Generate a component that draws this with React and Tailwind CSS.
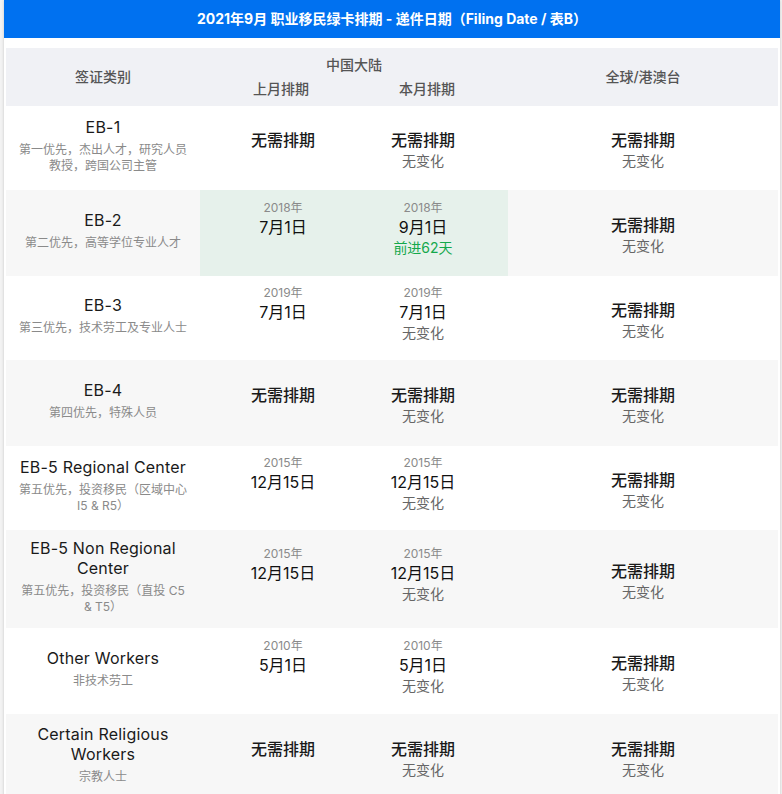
import React from "react";

const rows = [
  {
    title: ["EB-1"],
    sub: ["第一优先，杰出人才，研究人员", "教授，跨国公司主管"],
    prev: { main: "无需排期" },
    cur: { main: "无需排期", change: "无变化" },
    h: "h-[84px]",
    gray: false,
  },
  {
    title: ["EB-2"],
    sub: ["第二优先，高等学位专业人才"],
    prev: { year: "2018年", main: "7月1日" },
    cur: { year: "2018年", main: "9月1日", change: "前进62天", up: true },
    h: "h-[86px]",
    gray: true,
    green: true,
  },
  {
    title: ["EB-3"],
    sub: ["第三优先，技术劳工及专业人士"],
    prev: { year: "2019年", main: "7月1日" },
    cur: { year: "2019年", main: "7月1日", change: "无变化" },
    h: "h-[84px]",
    gray: false,
  },
  {
    title: ["EB-4"],
    sub: ["第四优先，特殊人员"],
    prev: { main: "无需排期" },
    cur: { main: "无需排期", change: "无变化" },
    h: "h-[86px]",
    gray: true,
  },
  {
    title: ["EB-5 Regional Center"],
    sub: ["第五优先，投资移民（区域中心", "I5 & R5）"],
    prev: { year: "2015年", main: "12月15日" },
    cur: { year: "2015年", main: "12月15日", change: "无变化" },
    h: "h-[84px]",
    gray: false,
  },
  {
    title: ["EB-5 Non Regional", "Center"],
    sub: ["第五优先，投资移民（直投 C5", "& T5）"],
    prev: { year: "2015年", main: "12月15日" },
    cur: { year: "2015年", main: "12月15日", change: "无变化" },
    h: "h-[98px]",
    gray: true,
  },
  {
    title: ["Other Workers"],
    sub: ["非技术劳工"],
    prev: { year: "2010年", main: "5月1日" },
    cur: { year: "2010年", main: "5月1日", change: "无变化" },
    h: "h-[86px]",
    gray: false,
  },
  {
    title: ["Certain Religious", "Workers"],
    sub: ["宗教人士"],
    prev: { main: "无需排期" },
    cur: { main: "无需排期", change: "无变化" },
    h: "h-[86px]",
    gray: true,
  },
];

function DateBlock({ d }) {
  const none = d.main === "无需排期";
  return (
    <div className={none ? "mb-[4px] flex flex-col items-center" : "flex flex-col items-center"}>
      <div className="h-4 text-xs leading-4 text-[#8a8a8a]">{d.year || ""}</div>
      <div
        className={
          none
            ? "h-[22px] text-base leading-[22px] font-medium text-[#1a1a1a]"
            : "h-[22px] text-base leading-[22px] text-[#111]"
        }
      >
        {d.main}
      </div>
      <div
        className={
          d.up
            ? "h-5 text-sm leading-5 text-[#14a84b]"
            : "h-5 text-sm leading-5 text-[#666]"
        }
      >
        {d.change || ""}
      </div>
    </div>
  );
}

function Row({ r }) {
  const base = r.gray ? "bg-[#f7f7f7]" : "bg-white";
  const mid = r.green ? "bg-[#e6f1eb]" : base;
  return (
    <div className={`grid grid-cols-[194px_154px_154px_270px] ${r.h}`}>
      <div className={`flex flex-col items-center justify-center px-3 pb-[6px] text-center ${base}`}>
        <div className="text-base leading-5 tracking-[0.2px] text-[#1a1a1a]">
          {r.title.map((t, i) => (
            <div key={i}>{t}</div>
          ))}
        </div>
        <div className="mt-[5px] text-xs leading-4 text-[#8a8a8a]">
          {r.sub.map((t, i) => (
            <div key={i}>{t}</div>
          ))}
        </div>
      </div>
      <div className={`flex flex-col justify-center pb-2 pl-3 ${mid}`}>
        <DateBlock d={r.prev} />
      </div>
      <div className={`flex flex-col justify-center pb-2 pr-4 ${mid}`}>
        <DateBlock d={r.cur} />
      </div>
      <div className={`flex flex-col justify-center pb-2 ${base}`}>
        <DateBlock d={{ main: "无需排期", change: "无变化" }} />
      </div>
    </div>
  );
}

export default function App() {
  return (
    <div className="min-h-screen bg-[#f3f3f3] font-[Inter,'Noto_Sans_CJK_SC',sans-serif]">
      <div className="ml-[4px] min-h-screen w-[776px] bg-white shadow-[0_0_3px_rgba(0,0,0,0.18)]">
        <div className="flex h-[38px] items-center justify-center bg-[#0071f0] text-sm font-bold text-white">
          2021年9月 职业移民绿卡排期 - 递件日期（Filing Date / 表B）
        </div>
        <div className="px-[2px] pt-[10px]">
          <div className="grid h-[58px] grid-cols-[194px_154px_154px_270px] bg-[#f0f1f5] text-sm font-medium text-[#555]">
            <div className="flex items-center justify-center">签证类别</div>
            <div className="col-span-2 flex flex-col py-[7px]">
              <div className="text-center leading-5">中国大陆</div>
              <div className="mt-1 grid grid-cols-2 leading-5">
                <div className="pl-2 text-center">上月排期</div>
                <div className="pr-2 text-center">本月排期</div>
              </div>
            </div>
            <div className="flex items-center justify-center">全球/港澳台</div>
          </div>
          {rows.map((r, i) => (
            <Row key={i} r={r} />
          ))}
        </div>
      </div>
    </div>
  );
}
